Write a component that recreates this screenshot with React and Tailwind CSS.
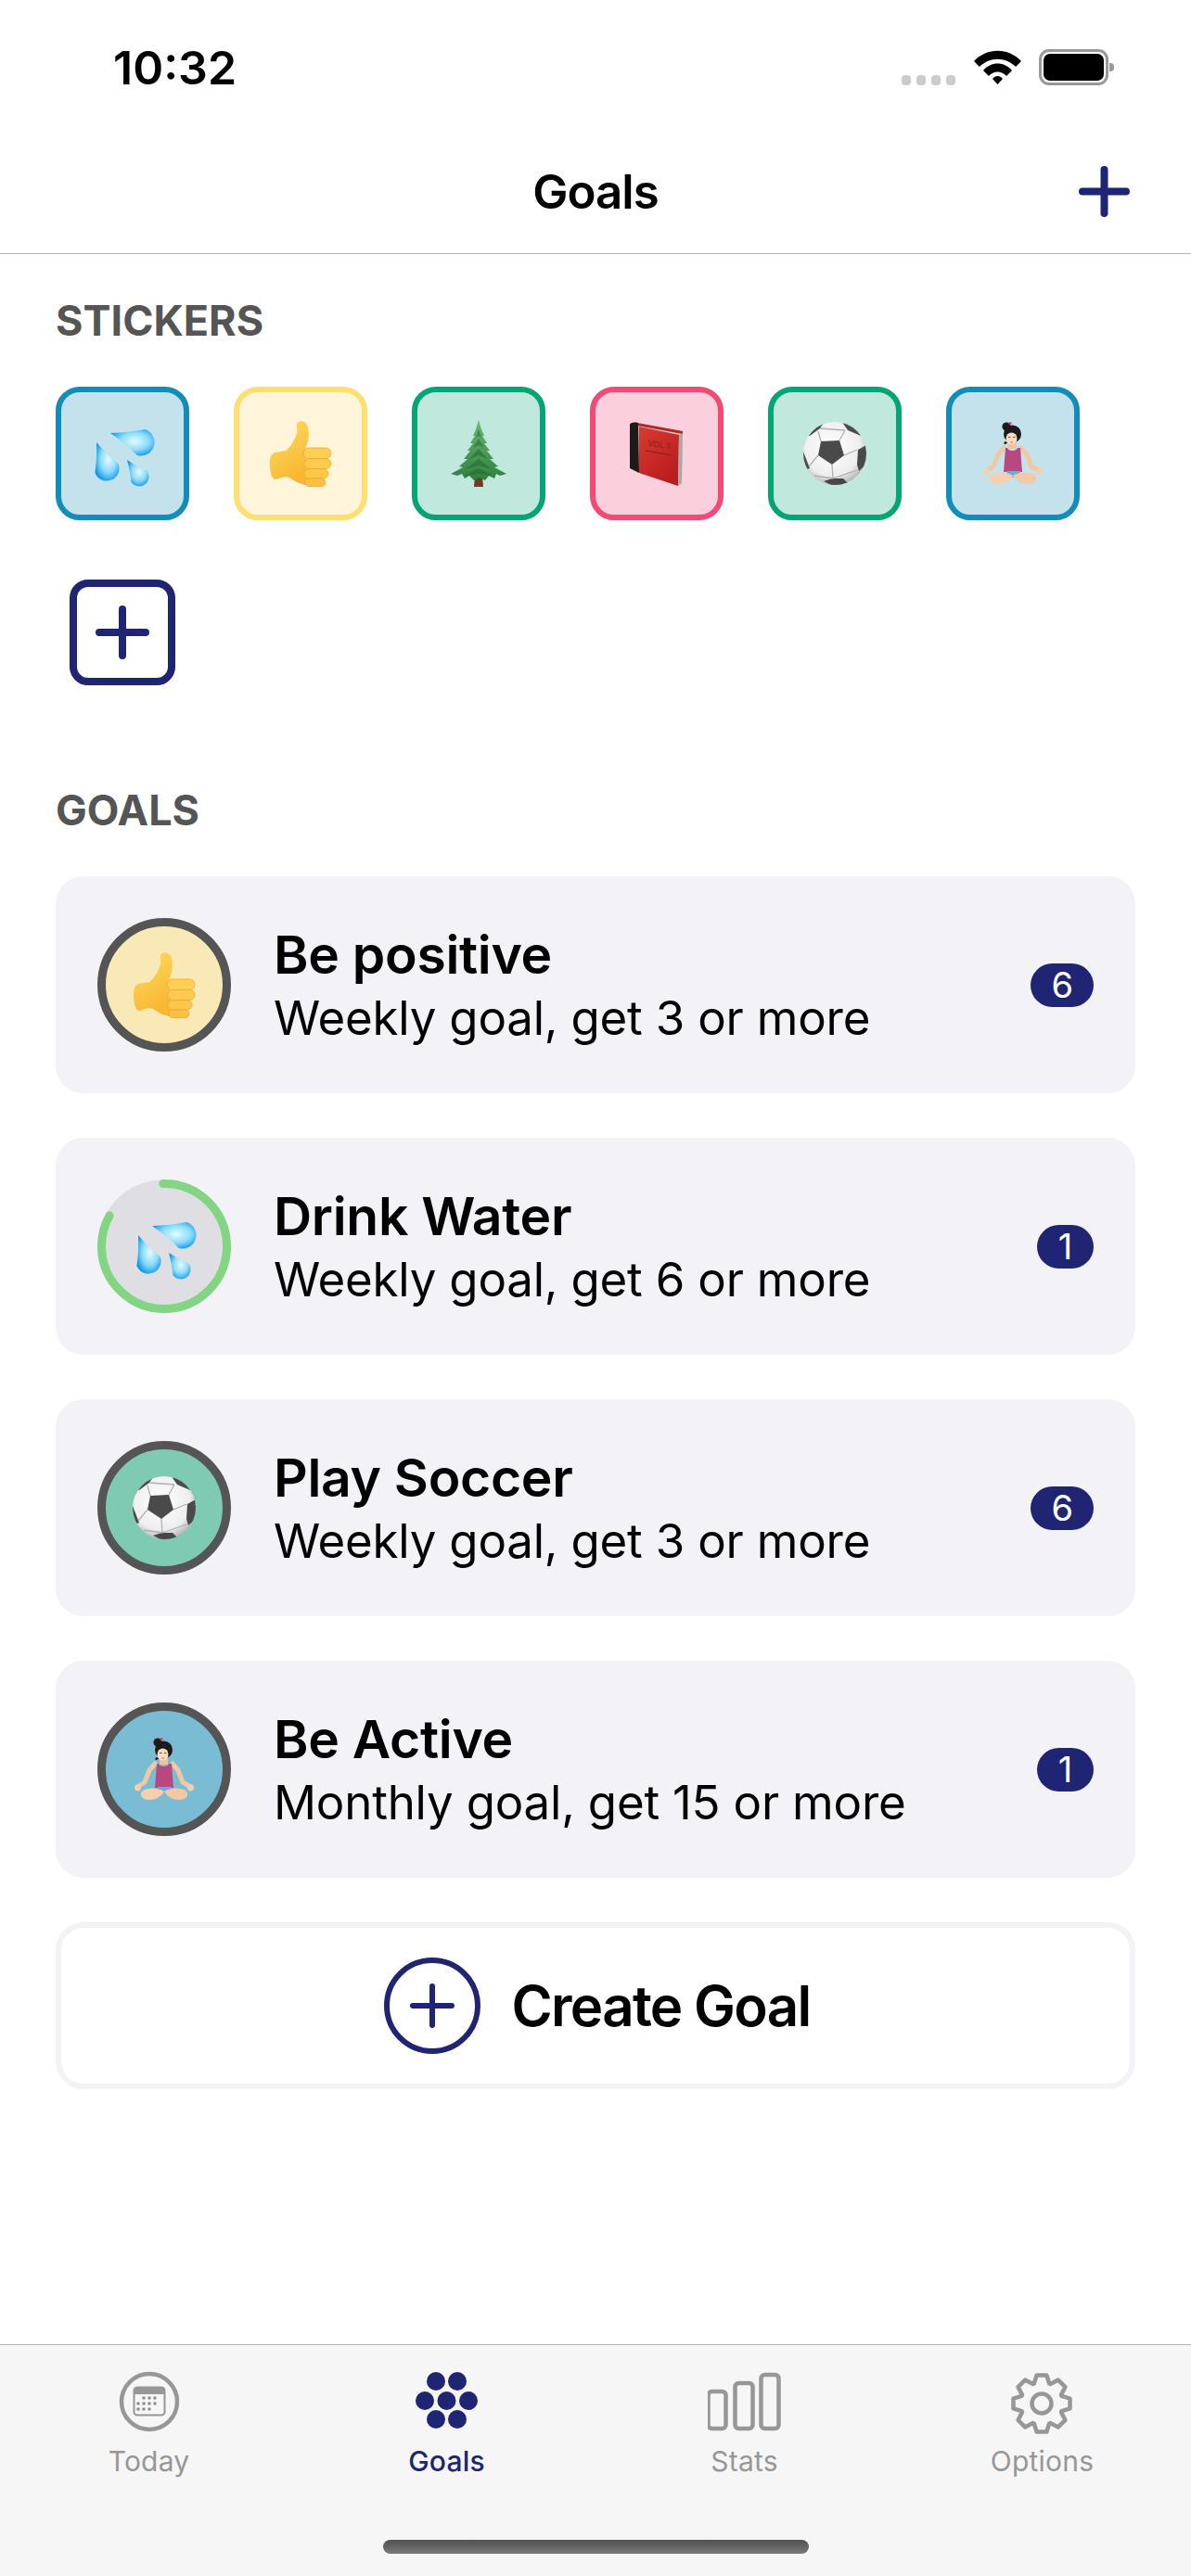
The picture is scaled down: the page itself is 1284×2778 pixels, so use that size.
const navy = '#1f2573';

const dropPath = (tx, ty, cx, cy, r) => {
  const dx = cx - tx;
  const dy = cy - ty;
  const len = Math.hypot(dx, dy);
  const ux = dx / len;
  const uy = dy / len;
  const nx = -uy;
  const ny = ux;
  const ax = cx + nx * r;
  const ay = cy + ny * r;
  const bx = cx - nx * r;
  const by = cy - ny * r;
  // sides bow in a little on the way to the tip
  const k = len * 0.55;
  const q1x = tx + ux * k + nx * r * 0.42;
  const q1y = ty + uy * k + ny * r * 0.42;
  const q2x = tx + ux * k - nx * r * 0.42;
  const q2y = ty + uy * k - ny * r * 0.42;
  return `M${tx} ${ty} Q${q1x} ${q1y} ${ax} ${ay} A${r} ${r} 0 1 0 ${bx} ${by} Q${q2x} ${q2y} ${tx} ${ty} Z`;
};

const Drops = () => (
  <svg width="72" height="72" viewBox="0 0 72 72">
    <defs>
      <radialGradient id="drop" cx="0.55" cy="0.45" r="0.6">
        <stop offset="0" stopColor="#e4fbff" />
        <stop offset="0.55" stopColor="#8adcfb" />
        <stop offset="1" stopColor="#0c96e8" />
      </radialGradient>
    </defs>
    <path d={dropPath(23, 14, 56, 24, 14.5)} fill="url(#drop)" />
    <path d={dropPath(8, 24, 19, 52, 13.5)} fill="url(#drop)" />
    <path d={dropPath(41, 43, 54, 61, 10.5)} fill="url(#drop)" />
  </svg>
);

const Thumb = () => (
  <svg width="72" height="72" viewBox="0 0 72 72">
    <defs>
      <linearGradient id="thumb" x1="0" y1="0" x2="0.4" y2="1">
        <stop offset="0" stopColor="#ffdc62" />
        <stop offset="1" stopColor="#f8b733" />
      </linearGradient>
    </defs>
    <path
      d="M3 47C3 41 4 37 8 35L20 33C25 30 30 21 32 14C33 9 31 7 32 4C34 0 42 0 44 8C46 17 44 25 41 31L46 70C38 71 30 66 24 62C18 60 14 63 9 64C5 64 3 56 3 47Z"
      fill="url(#thumb)"
    />
    <rect x="39" y="30" width="30" height="11.5" rx="5.7" fill="#fdcf55" stroke="#eeaa2b" strokeWidth="0.8" />
    <rect x="40" y="41.5" width="29" height="11" rx="5.5" fill="#fdcb50" stroke="#eeaa2b" strokeWidth="0.8" />
    <rect x="40" y="52.5" width="26" height="10.5" rx="5.2" fill="#fcc649" stroke="#eeaa2b" strokeWidth="0.8" />
    <rect x="41" y="63" width="22" height="8.5" rx="4.2" fill="#fac043" stroke="#eeaa2b" strokeWidth="0.8" />
  </svg>
);

const Tree = () => (
  <svg width="72" height="72" viewBox="0 0 72 72">
    <defs>
      <linearGradient id="tree" x1="0" y1="0" x2="0" y2="1">
        <stop offset="0" stopColor="#6cb874" />
        <stop offset="1" stopColor="#2f8040" />
      </linearGradient>
    </defs>
    <path d="M32 60H40L41 72H31Z" fill="#6b3d22" />
    <path d="M36 0L39 10L42 17L40 17L45 25L42 25L48 33L45 33L52 42L48 42L57 50L53 51L66 58L59 60L55 58L53 63L47 60L43 65L37 62L31 65L26 60L21 63L18 58L13 60L6 58L19 51L15 50L24 42L20 42L27 33L24 33L30 25L27 25L32 17L30 17L33 10Z" fill="url(#tree)" />
    <path d="M36 10L39 19L36 17L33 19ZM36 20L42 30L36 27L30 30ZM36 31L46 42L36 38L26 42ZM36 42L50 53L36 49L22 53ZM36 52L52 60L36 58L20 60Z" fill="#1f6329" opacity="0.5" />
  </svg>
);

const Book = () => (
  <svg width="72" height="72" viewBox="0 0 72 72">
    <defs>
      <linearGradient id="book" x1="0" y1="0" x2="0.7" y2="1">
        <stop offset="0" stopColor="#d93a33" />
        <stop offset="1" stopColor="#b81c1c" />
      </linearGradient>
    </defs>
    <path d="M15 4L64 12L63 68L58 70L15 55Z" fill="#c9c9c9" />
    <path d="M15 3L64 12L64 15L15 6Z" fill="#b32626" />
    <path d="M7 5C7 3 12 2 16 3L17 57L7 52Z" fill="#1d1a1a" />
    <path d="M17 7L60 16L59 71L17 57Z" fill="url(#book)" />
    <path d="M60 16L64 15L63 68L59 71Z" fill="#a9a9a9" />
    <text x="26" y="28" fontSize="9" fill="#8a1c1c" fontFamily="Inter, sans-serif" transform="rotate(8 26 28)">VOL 1</text>
    <path d="M24 33L52 38" stroke="#8a1c1c" strokeWidth="1" />
  </svg>
);

const Ball = () => (
  <svg width="72" height="72" viewBox="0 0 72 72">
    <defs>
      <radialGradient id="ball" cx="0.45" cy="0.4" r="0.65">
        <stop offset="0" stopColor="#ffffff" />
        <stop offset="0.7" stopColor="#eeeeee" />
        <stop offset="1" stopColor="#a8a8a8" />
      </radialGradient>
      <clipPath id="ballClip">
        <circle cx="36" cy="36" r="34" />
      </clipPath>
    </defs>
    <circle cx="36" cy="36" r="34" fill="url(#ball)" />
    <g clipPath="url(#ballClip)">
      <path d="M21 23L41 22L46 38L33 48L18 38Z" fill="#4a4a4a" />
      <path d="M24 3L20 9L9 17L4 16L14 4Z" fill="#4c4c4c" />
      <path d="M43 1L62 8L64 17L50 11Z" fill="#4c4c4c" />
      <path d="M61 32L70 27L72 46L62 55L60 48Z" fill="#4a4a4a" />
      <path d="M2 34L9 52L4 54L0 44Z" fill="#4a4a4a" />
      <path d="M24 66L33 63L45 63L50 68L36 72Z" fill="#474747" />
      <path d="M21 23L18 12M41 22L47 11M46 38L60 32M33 48L34 63M18 38L8 50M20 9L47 11M34 63L14 60M34 63L60 54" stroke="#b0b0b0" strokeWidth="1.3" fill="none" />
    </g>
  </svg>
);

const Yoga = () => (
  <svg width="72" height="72" viewBox="0 0 72 72">
    <path d="M26 30L20 37L15 50L7 55" stroke="#f2c8a3" strokeWidth="5" fill="none" strokeLinecap="round" strokeLinejoin="round" />
    <path d="M45 30L51 37L56 50L65 55" stroke="#f2c8a3" strokeWidth="5" fill="none" strokeLinecap="round" strokeLinejoin="round" />
    <circle cx="7.5" cy="56" r="3.4" fill="#f6d0ae" />
    <circle cx="64.5" cy="56" r="3.4" fill="#f6d0ae" />
    <path d="M31 24H40V31H31Z" fill="#efc19c" />
    <path d="M28 30L30 30C31 34 40 34 41 30L44 30L46 56H26Z" fill="#b8487f" />
    <path d="M29 55H44L42 62H31Z" fill="#6fa8dc" />
    <path d="M36 60C30 56 18 55 12 60C9 64 12 69 20 69C28 69 34 64 36 60Z" fill="#f6d0ae" />
    <path d="M36 60C42 56 54 55 60 60C63 64 60 69 52 69C44 69 38 64 36 60Z" fill="#f3c8a4" />
    <circle cx="35.5" cy="15" r="9.5" fill="#1d1a1a" />
    <circle cx="29" cy="7" r="4.6" fill="#1d1a1a" />
    <circle cx="33" cy="3.5" r="1.6" fill="#d13c7a" />
    <path d="M27 23C27 25 25 26 28 26L31 24Z" fill="#1d1a1a" />
    <ellipse cx="34.5" cy="20" rx="6" ry="6.6" fill="#f8dcc2" />
    <path d="M31 18.5H33.5M36 18.5H38.5" stroke="#4a3326" strokeWidth="0.8" />
    <path d="M33.5 24H36" stroke="#c5605c" strokeWidth="1" />
  </svg>
);

const stickers = [
  { Icon: Drops, box: 'bg-[#c4e2ec] border-[#128cb8]' },
  { Icon: Thumb, box: 'bg-[#fff5da] border-[#ffdf70]' },
  { Icon: Tree, box: 'bg-[#c0e8dc] border-[#04a474]' },
  { Icon: Book, box: 'bg-[#fbd0dc] border-[#f24a74]' },
  { Icon: Ball, box: 'bg-[#c0e8dc] border-[#04a474]' },
  { Icon: Yoga, box: 'bg-[#c4e2ec] border-[#128cb8]' },
];

const goals = [
  { name: 'Be positive', sub: 'Weekly goal, get 3 or more', count: 6, Icon: Thumb, fill: 'bg-[#f9e9b6] border-[#555555]' },
  { name: 'Drink Water', sub: 'Weekly goal, get 6 or more', count: 1, Icon: Drops, fill: 'bg-[#dfdfe3] border-transparent', ring: true },
  { name: 'Play Soccer', sub: 'Weekly goal, get 3 or more', count: 6, Icon: Ball, fill: 'bg-[#7fcab3] border-[#555555]' },
  { name: 'Be Active', sub: 'Monthly goal, get 15 or more', count: 1, Icon: Yoga, fill: 'bg-[#7bbcd5] border-[#555555]' },
];

const Plus = ({ size, stroke, className }) => (
  <svg width={size} height={size} viewBox={`0 0 ${size} ${size}`} className={className}>
    <path
      d={`M${size / 2} ${stroke / 2}V${size - stroke / 2}M${stroke / 2} ${size / 2}H${size - stroke / 2}`}
      stroke={navy}
      strokeWidth={stroke}
      strokeLinecap="round"
    />
  </svg>
);

const StatusBar = () => (
  <div className="h-[141px] flex justify-between items-start pl-[122px] pr-[82px] pt-[44px]">
    <span className="text-[50px] leading-[58px] font-semibold text-black">10:32</span>
    <div className="relative w-[230px] h-[50px] mt-[8px]">
      <div className="absolute left-0 top-[29px] flex gap-[6px]">
        <div className="w-[10px] h-[11px] rounded-[4px] bg-[#cccccc]" />
        <div className="w-[10px] h-[11px] rounded-[4px] bg-[#cccccc]" />
        <div className="w-[10px] h-[11px] rounded-[4px] bg-[#cccccc]" />
        <div className="w-[10px] h-[11px] rounded-[4px] bg-[#cccccc]" />
      </div>
      <svg className="absolute left-[78px] top-[2px]" width="51" height="37" viewBox="0 0 51 37">
        <path d="M0 12C14 -3 37 -3 51 12L45 18C34 7 17 7 6 18Z" fill="#000" />
        <path d="M10 22C18 12 33 12 41 22L35 28C30 22 21 22 16 28Z" fill="#000" />
        <path d="M20 31C23 27 28 27 31 31L25.5 37Z" fill="#000" />
      </svg>
      <div className="absolute left-[148px] top-[1px] w-[75px] h-[39px] rounded-[11px] border-[3px] border-[#999999] p-[2px]">
        <div className="w-full h-full rounded-[7px] bg-black" />
      </div>
      <div className="absolute left-[224px] top-[16px] w-[5px] h-[9px] rounded-r-[4px] bg-[#999999]" />
    </div>
  </div>
);

const StickerBox = ({ Icon, box }) => (
  <div className={`w-[144px] h-[144px] rounded-[26px] border-[6px] flex items-center justify-center ${box}`}>
    <Icon />
  </div>
);

const GoalCard = ({ name, sub, count, Icon, fill, ring }) => (
  <div className="h-[234px] rounded-[30px] bg-[#f2f2f7] flex items-center pl-[45px] pr-[45px]">
    <div className={`relative w-[144px] h-[144px] rounded-full border-[9px] flex items-center justify-center shrink-0 ${fill}`}>
      <Icon />
      {ring && (
        <svg className="absolute -left-[9px] -top-[9px]" width="144" height="144" viewBox="0 0 144 144">
          <circle
            cx="72"
            cy="72"
            r="67.5"
            fill="none"
            stroke="#83d483"
            strokeWidth="9"
            strokeLinecap="round"
            strokeDasharray="353.4 424.1"
            transform="rotate(-91 72 72)"
          />
        </svg>
      )}
    </div>
    <div className="ml-[46px] mt-[3px] flex-1">
      <div className="text-[57px] leading-[66px] font-semibold tracking-[-0.3px] text-black">{name}</div>
      <div className="mt-[3px] text-[51px] leading-[64px] tracking-[-0.2px] text-black">{sub}</div>
    </div>
    <div className="h-[47px] min-w-[61px] px-[22px] rounded-full bg-[#1f2573] flex items-center justify-center text-[38px] text-white">
      {count}
    </div>
  </div>
);

const gearPath = (() => {
  const pts = [];
  for (let i = 0; i < 8; i++) {
    const a = (i * 45 * Math.PI) / 180;
    [[-21, 23], [-10, 31], [10, 31], [21, 23]].forEach(([d, r]) => {
      const t = a + (d * Math.PI) / 180;
      pts.push(`${(39 + r * Math.sin(t)).toFixed(1)} ${(36 - r * Math.cos(t)).toFixed(1)}`);
    });
  }
  return `M${pts.join('L')}Z`;
})();

const TodayIcon = () => (
  <svg width="80" height="70" viewBox="0 0 80 70">
    <circle cx="40" cy="34" r="30" fill="none" stroke="#979797" strokeWidth="4.5" />
    <rect x="23.5" y="18.5" width="33" height="30" rx="3.5" fill="#f6f6f6" stroke="#979797" strokeWidth="2" />
    <path d="M23 22a4 4 0 0 1 4-4h26a4 4 0 0 1 4 4v4H23Z" fill="#979797" />
    {[[34, 30], [40, 30], [46, 30], [28, 36], [34, 36], [40, 36], [46, 36], [28, 42], [34, 42], [40, 42]].map(([x, y]) => (
      <rect key={`${x}-${y}`} x={x - 1.5} y={y - 1.5} width="3" height="3" fill="#8a8a8a" />
    ))}
  </svg>
);

const GoalsIcon = () => (
  <svg width="80" height="70" viewBox="0 0 80 70">
    {[[28, 12], [51, 12], [16, 33], [39.5, 33], [63, 33], [28, 53], [51, 53]].map(([x, y]) => (
      <circle key={`${x}-${y}`} cx={x} cy={y} r="10" fill={navy} />
    ))}
  </svg>
);

const StatsIcon = () => (
  <svg width="80" height="70" viewBox="0 0 80 70">
    <rect x="0.5" y="23" width="19" height="40" rx="4" fill="none" stroke="#979797" strokeWidth="4.5" />
    <rect x="29.5" y="14" width="19" height="49" rx="4" fill="none" stroke="#979797" strokeWidth="4.5" />
    <rect x="57.5" y="5" width="19" height="58" rx="4" fill="none" stroke="#979797" strokeWidth="4.5" />
  </svg>
);

const OptionsIcon = () => (
  <svg width="80" height="70" viewBox="0 0 80 70">
    <path d={gearPath} fill="none" stroke="#979797" strokeWidth="4.5" strokeLinejoin="round" />
    <circle cx="39" cy="36" r="10.5" fill="none" stroke="#979797" strokeWidth="4.5" />
  </svg>
);

const tabs = [
  { label: 'Today', Icon: TodayIcon },
  { label: 'Goals', Icon: GoalsIcon, active: true },
  { label: 'Stats', Icon: StatsIcon },
  { label: 'Options', Icon: OptionsIcon },
];

export default function App() {
  return (
    <div className="w-[1284px] h-[2778px] bg-white flex flex-col overflow-hidden font-[Inter,sans-serif]">
      <StatusBar />
      <div className="relative h-[133px] border-b border-[#b2b2b2] flex items-center justify-center">
        <span className="text-[51px] font-semibold tracking-[-1px] text-black">Goals</span>
        <Plus size={55} stroke={8} className="absolute right-[66px] top-[38px]" />
      </div>

      <div className="px-[60px] pt-[45px]">
        <h2 className="text-[45px] leading-[54px] font-bold text-[#555555] mb-[44px]">STICKERS</h2>
        <div className="flex flex-wrap gap-[48px]">
          {stickers.map((s, i) => (
            <StickerBox key={i} {...s} />
          ))}
          <div className="w-[144px] h-[144px] flex items-center justify-center">
            <div className="mt-[2px] w-[114px] h-[114px] rounded-[20px] border-[8px] border-[#1f2573] flex items-center justify-center">
              <Plus size={58} stroke={8} />
            </div>
          </div>
        </div>

        <h2 className="text-[45px] leading-[54px] font-bold text-[#555555] mt-[94px] mb-[44px]">GOALS</h2>
        <div className="flex flex-col gap-[48px]">
          {goals.map((g) => (
            <GoalCard key={g.name} {...g} />
          ))}
        </div>

        <div className="mt-[48px] h-[180px] rounded-[30px] border-[6px] border-[#f2f2f7] flex items-center justify-center pl-[3px]">
          <div className="w-[104px] h-[104px] rounded-full border-[6px] border-[#1f2573] flex items-center justify-center">
            <Plus size={48} stroke={6} />
          </div>
          <span className="ml-[34px] text-[60px] font-semibold tracking-[-1.7px] text-black">Create Goal</span>
        </div>
      </div>

      <div className="mt-auto h-[250px] border-t border-[#b2b2b2] bg-[#f6f6f6] flex flex-col">
        <div className="flex pt-[27px]">
          {tabs.map(({ label, Icon, active }) => (
            <div key={label} className="flex-1 flex flex-col items-center">
              <Icon />
              <span className={`mt-[10px] text-[30px] leading-[36px] tracking-[0.2px] ${active ? 'text-[#1f2573] font-medium' : 'text-[#979797]'}`}>
                {label}
              </span>
            </div>
          ))}
        </div>
        <div className="mt-auto mb-[24px] mx-auto w-[459px] h-[15px] rounded-[8px] bg-linear-to-b from-[#505050] to-[#7a7a7a]" />
      </div>
    </div>
  );
}
